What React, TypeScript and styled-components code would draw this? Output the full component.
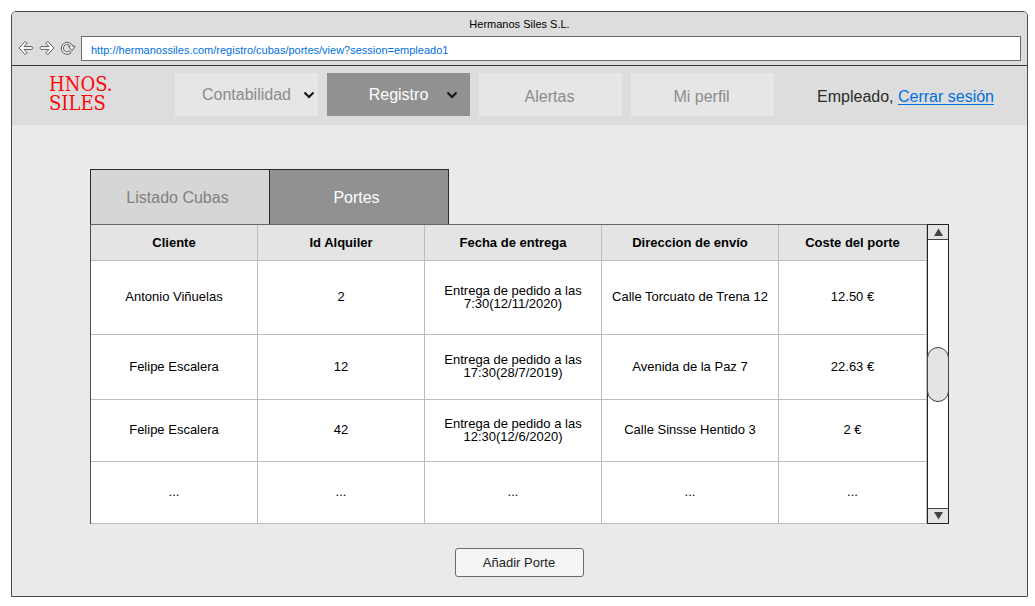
import React from "react";
import styled, { createGlobalStyle } from "styled-components";

const GlobalStyle = createGlobalStyle`
  *, *::before, *::after { box-sizing: border-box; }
  body {
    margin: 0;
    background: #fff;
    color: #000;
    font-family: "Liberation Sans", Arial, sans-serif;
    font-size: 13px;
  }
  button, input, select { font: inherit; }
`;

const Window = styled.div`
  display: flex;
  flex-direction: column;
  min-height: calc(100vh - 20px);
  margin: 11px 7px 9px 11px;
  background: #eaeaea;
  border: 1px solid #4a4a4c;
  border-radius: 5px 5px 0 0;
`;

const Chrome = styled.div`
  background: #ddd;
  border-bottom: 1px solid #39393b;
  border-radius: 4px 4px 0 0;
`;

const Title = styled.div`
  height: 24px;
  line-height: 24px;
  font-size: 11px;
  text-align: center;
`;

const Toolbar = styled.form`
  display: flex;
  align-items: flex-start;
  gap: 5px;
  padding: 0 6px 4px;
`;

const IconButton = styled.button`
  display: flex;
  margin-top: 4px;
  padding: 0;
  border: 0;
  background: none;
`;

const Address = styled.input`
  flex: 1;
  min-width: 0;
  height: 25px;
  padding: 2px 9px 0;
  border: 1px solid #6b6b6d;
  border-radius: 0;
  background: #fff;
  color: #0070e0;
  font-size: 11px;
`;

const Header = styled.header`
  display: flex;
  align-items: flex-start;
  justify-content: space-between;
  height: 59px;
  padding: 7px 33px 0 37px;
  background: #ddd;
  font-size: 16px;
`;

const Brand = styled.div`
  width: 126px;
  padding-top: 2px;
  color: #fa0808;
  font-family: "DejaVu Serif Condensed", "DejaVu Serif", serif;
  font-size: 20px;
  line-height: 19px;
`;

const Nav = styled.nav`
  display: flex;
  gap: 9px;
  margin-right: auto;
`;

const NavItem = styled.div`
  position: relative;
  width: 143px;
  height: 43px;
`;

const NavButton = styled.button`
  width: 100%;
  height: 100%;
  padding: 4px 2px 0 0;
  border: 0;
  background: #e6e6e6;
  color: #8c8c8c;
`;

const NavSelect = styled.select<{ $active?: boolean }>`
  width: 100%;
  height: 100%;
  padding: 0;
  border: 0;
  border-radius: 0;
  appearance: none;
  text-align: center;
  text-align-last: center;
  background: ${(p) => (p.$active ? "#919191" : "#e6e6e6")};
  color: ${(p) => (p.$active ? "#fff" : "#8c8c8c")};
`;

const Chevron = styled.svg<{ $inset: number }>`
  position: absolute;
  top: 18px;
  right: ${(p) => p.$inset}px;
  pointer-events: none;
`;

const Session = styled.div`
  color: #2b2b2b;
  line-height: 43px;
  padding-top: 2px;
  white-space: nowrap;
`;

const SessionLink = styled.a`
  color: #0070e0;
  text-underline-offset: 2px;
`;

const Main = styled.main`
  display: flex;
  flex-direction: column;
  padding: 44px 78px 19px;
`;

const Tabs = styled.div`
  display: flex;
`;

const Tab = styled.button<{ $active?: boolean }>`
  width: 180px;
  height: 55px;
  padding: 2px 5px 0 0;
  border: 1px solid #2b2b2b;
  border-bottom: 0;
  font-size: 16px;
  background: ${(p) => (p.$active ? "#919191" : "#d6d6d6")};
  color: ${(p) => (p.$active ? "#fff" : "#808080")};
  & + & { margin-left: -1px; }
`;

const TablePanel = styled.div`
  display: flex;
  width: 100%;
`;

const Table = styled.table`
  flex: 1;
  table-layout: fixed;
  border-collapse: separate;
  border-spacing: 0;
  border-top: 1px solid #666;
  border-left: 1px solid #4d4d4d;
  background: #fff;
  line-height: 13px;
  text-align: center;
`;

const Column = styled.col<{ $share: number }>`
  width: ${(p) => p.$share * 100}%;
`;

const HeadCell = styled.th`
  height: 36px;
  padding: 0 4px;
  background: #e4e4e4;
  border-right: 1px solid #bdbdbd;
  border-bottom: 1px solid #bdbdbd;
`;

const Row = styled.tr<{ $height: number }>`
  height: ${(p) => p.$height}px;
`;

const Cell = styled.td`
  padding: 0 4px 2px;
  border-right: 1px solid #bdbdbd;
  border-bottom: 1px solid #bdbdbd;
  white-space: pre-line;
`;

const Scrollbar = styled.div`
  display: flex;
  flex-direction: column;
  width: 22px;
  border: 1px solid #222;
  background: #fff;
`;

const ScrollArrow = styled.button<{ $down?: boolean }>`
  display: flex;
  align-items: center;
  justify-content: center;
  height: 15px;
  padding: 0;
  border: 0 solid #444;
  border-width: ${(p) => (p.$down ? "1px 0 0" : "0 0 1px")};
  background: #e4e4e4;
`;

const Track = styled.div`
  display: flex;
  flex: 1;
  flex-direction: column;
`;

const TrackSpace = styled.div`
  flex: 1;
`;

const Thumb = styled.div`
  height: 55px;
  margin: 0 -1px;
  border: 1px solid #444;
  border-radius: 11px;
  background: #e4e4e4;
`;

const AddButton = styled.button`
  align-self: center;
  width: 129px;
  height: 29px;
  margin-top: 24px;
  padding: 0 1px 1px 0;
  border: 1px solid #6b6b6b;
  border-radius: 3px;
  background: #f5f5f5;
  color: #222;
`;

const columns = [
  { name: "Cliente", weight: 167 },
  { name: "Id Alquiler", weight: 167 },
  { name: "Fecha de entrega", weight: 177 },
  { name: "Direccion de envío", weight: 177 },
  { name: "Coste del porte", weight: 148 },
];

const totalWeight = columns.reduce((sum, c) => sum + c.weight, 0);

const rows = [
  { height: 74, cells: ["Antonio Viñuelas", "2", "Entrega de pedido a las\n7:30(12/11/2020)", "Calle Torcuato de Trena 12", "12.50 €"] },
  { height: 65, cells: ["Felipe Escalera", "12", "Entrega de pedido a las\n17:30(28/7/2019)", "Avenida de la Paz 7", "22.63 €"] },
  { height: 62, cells: ["Felipe Escalera", "42", "Entrega de pedido a las\n12:30(12/6/2020)", "Calle Sinsse Hentido 3", "2 €"] },
  { height: 62, cells: ["...", "...", "...", "...", "..."] },
];

const ArrowIcon = ({ forward }: { forward?: boolean }) => (
  <svg width="16" height="16" viewBox="0 0 16 16" aria-hidden="true">
    <path
      d="M1 8L7.2 1.5L9.2 3.2L6 6.6H14L15.2 8L14 9.4H6L9.2 12.8L7.2 14.5Z"
      transform={forward ? "matrix(-1 0 0 1 16 0)" : undefined}
      fill="#fff"
      stroke="#5c5c5c"
      strokeLinejoin="round"
    />
  </svg>
);

const ReloadIcon = () => (
  <svg width="16" height="16" viewBox="0 0 16 16" aria-hidden="true">
    <path
      d="M11.2 12.9A6 6 0 1 1 12.9 6.2H15.2L12 10.8L8.6 6.6L10.3 6.2A3.7 3.7 0 1 0 9.4 11Z"
      fill="#eee"
      stroke="#5c5c5c"
      strokeLinejoin="round"
    />
  </svg>
);

const NavMenu = ({ label, active, inset }: { label: string; active?: boolean; inset: number }) => (
  <NavItem>
    <NavSelect aria-label={label} $active={active}>
      <option>{label}</option>
    </NavSelect>
    <Chevron $inset={inset} width="12" height="8" viewBox="0 0 12 8" aria-hidden="true">
      <path d="M1.5 1.5L6 6L10.5 1.5" fill="none" stroke="#111" strokeWidth="2" />
    </Chevron>
  </NavItem>
);

export default function App() {
  return (
    <>
      <GlobalStyle />
      <Window>
        <Chrome>
          <Title>Hermanos Siles S.L.</Title>
          <Toolbar>
            <IconButton type="button" aria-label="Atrás"><ArrowIcon /></IconButton>
            <IconButton type="button" aria-label="Adelante"><ArrowIcon forward /></IconButton>
            <IconButton type="button" aria-label="Recargar"><ReloadIcon /></IconButton>
            <Address
              aria-label="Dirección"
              defaultValue="http://hermanossiles.com/registro/cubas/portes/view?session=empleado1"
            />
          </Toolbar>
        </Chrome>
        <Header>
          <Brand>HNOS.<br />SILES</Brand>
          <Nav>
            <NavMenu label="Contabilidad" inset={3} />
            <NavMenu label="Registro" active inset={12} />
            <NavItem><NavButton>Alertas</NavButton></NavItem>
            <NavItem><NavButton>Mi perfil</NavButton></NavItem>
          </Nav>
          <Session>Empleado, <SessionLink href="#salir">Cerrar sesión</SessionLink></Session>
        </Header>
        <Main>
          <Tabs role="tablist">
            <Tab role="tab" aria-selected={false}>Listado Cubas</Tab>
            <Tab role="tab" aria-selected $active>Portes</Tab>
          </Tabs>
          <TablePanel>
            <Table>
              <colgroup>
                {columns.map((c) => <Column key={c.name} $share={c.weight / totalWeight} />)}
              </colgroup>
              <thead>
                <tr>{columns.map((c) => <HeadCell key={c.name} scope="col">{c.name}</HeadCell>)}</tr>
              </thead>
              <tbody>
                {rows.map((row, i) => (
                  <Row key={i} $height={row.height}>
                    {row.cells.map((text, j) => <Cell key={j}>{text}</Cell>)}
                  </Row>
                ))}
              </tbody>
            </Table>
            <Scrollbar>
              <ScrollArrow aria-label="Subir">
                <svg width="9" height="8" viewBox="0 0 9 8" aria-hidden="true"><path d="M4.5 0.5L9 8H0Z" fill="#444" /></svg>
              </ScrollArrow>
              <Track>
                <TrackSpace />
                <Thumb />
                <TrackSpace />
              </Track>
              <ScrollArrow $down aria-label="Bajar">
                <svg width="9" height="8" viewBox="0 0 9 8" aria-hidden="true"><path d="M0 0H9L4.5 7.5Z" fill="#444" /></svg>
              </ScrollArrow>
            </Scrollbar>
          </TablePanel>
          <AddButton>Añadir Porte</AddButton>
        </Main>
      </Window>
    </>
  );
}
